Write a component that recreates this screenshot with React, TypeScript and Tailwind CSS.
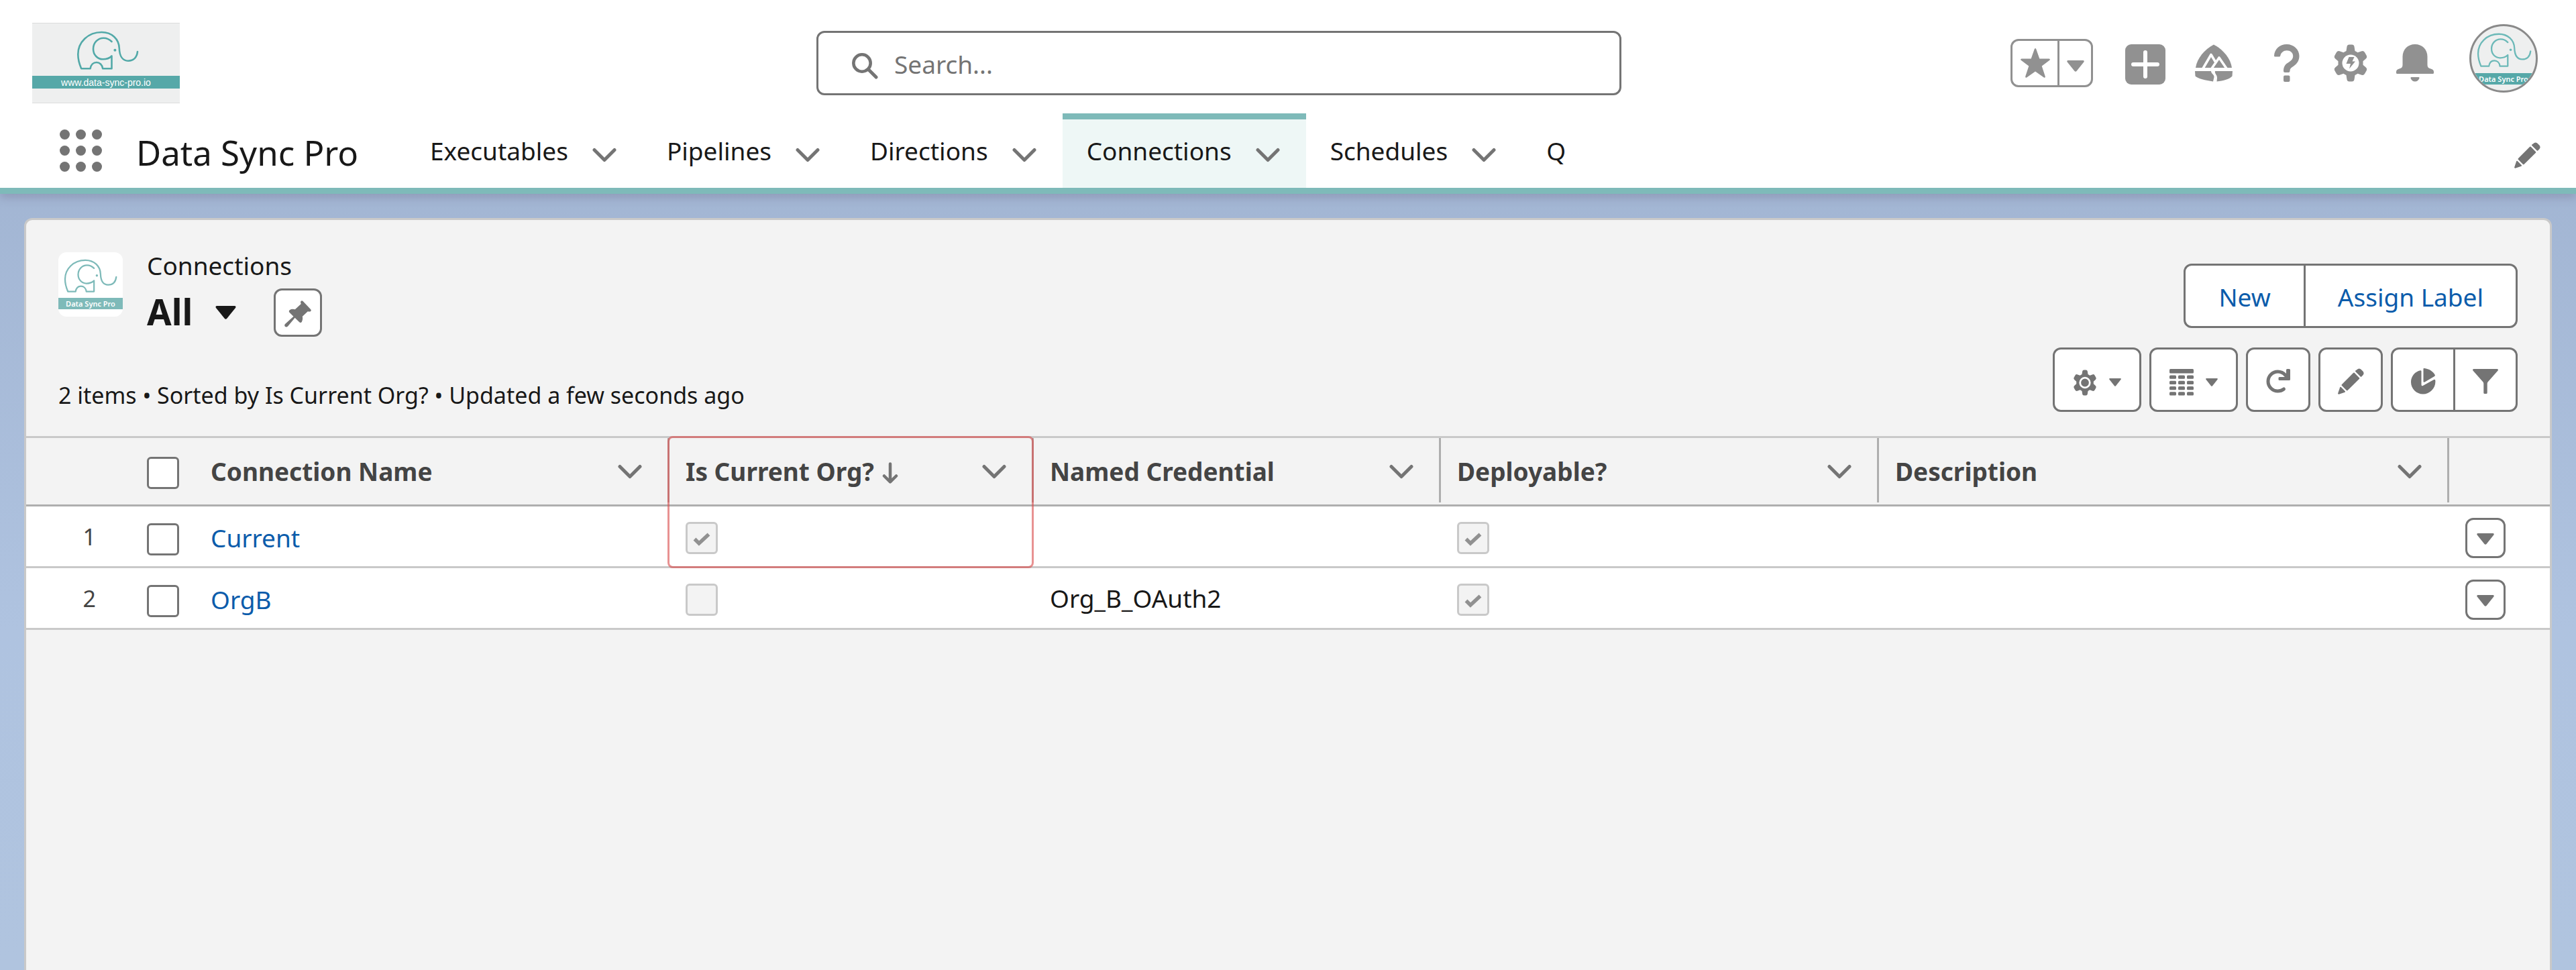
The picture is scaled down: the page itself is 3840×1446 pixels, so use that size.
import React from "react";

type IconProps = { className?: string };

function Elephant({ className }: IconProps) {
  return (
    <svg viewBox="-1 -1 93 59" className={className} fill="none" stroke="currentColor" strokeWidth="2.6" strokeLinecap="round" strokeLinejoin="round" aria-hidden="true">
      <path d="M51.5 15C48 11.500 44 9.700 39.500 9.700C30.500 9.700 24 17 24 26C24 35 30.500 41.300 38.500 41.300C43.500 41.300 48 40 51.500 36.500V55.300H38.200C37.500 49.500 33.500 46 28.900 46C24.200 46 20.500 49.500 19.600 55.300H6.200C3.500 49 1.300 42 1.300 34C1.300 16 16 1 36.500 1C51.500 1 62.300 11 62.800 25C63.200 37 68 43.700 76 43.700C84 43.700 89 38.500 90 30" />
      <circle cx="56.400" cy="27.700" r="2" fill="currentColor" stroke="none" />
    </svg>
  );
}

function Chevron({ className }: IconProps) {
  return (
    <svg viewBox="0 0 36 22" className={className} fill="none" stroke="currentColor" strokeWidth="5" strokeLinecap="round" strokeLinejoin="round" aria-hidden="true">
      <path d="M3 3.500L18 18.500L33 3.500" />
    </svg>
  );
}

function Caret({ className }: IconProps) {
  return (
    <svg viewBox="0 0 26 17" className={className} fill="currentColor" aria-hidden="true">
      <path d="M1.500 0H24.500Q26.500 0.500 25.300 2.500L14.500 16Q13 17.600 11.500 16L0.700 2.500Q-0.500 0.500 1.500 0Z" />
    </svg>
  );
}

function SearchIcon({ className }: IconProps) {
  return (
    <svg viewBox="0 0 39 39" className={className} fill="none" stroke="currentColor" strokeLinecap="round" aria-hidden="true">
      <circle cx="15" cy="15" r="12.700" strokeWidth="4.600" />
      <path d="M25 25L36 36" strokeWidth="5" />
    </svg>
  );
}

function Star({ className }: IconProps) {
  return (
    <svg viewBox="0 0 44 44" className={className} fill="currentColor" aria-hidden="true">
      <path d="M20.800 1Q22 -1 23.200 1L28.300 15.500H42.500Q44.800 16.200 43.300 17.800L31.700 26.500L36.800 42Q37 44.500 34.800 43.600L22 34.500L9.200 43.600Q7 44.500 7.200 42L12.300 26.500L0.700 17.800Q-0.800 16.200 1.500 15.500H15.700Z" />
    </svg>
  );
}

function Plus({ className }: IconProps) {
  return (
    <svg viewBox="0 0 60 60" className={className} aria-hidden="true">
      <rect width="60" height="60" rx="9" fill="currentColor" />
      <path d="M30 12V48M12 30H48" stroke="#fff" strokeWidth="6" strokeLinecap="round" />
    </svg>
  );
}

function Trailhead({ className }: IconProps) {
  return (
    <svg viewBox="0 0 56 56" className={className} aria-hidden="true">
      <path d="M28 0.500C14 8 3 21 1 35H55C53 21 42 8 28 0.500Z" fill="currentColor" />
      <path d="M12 36L24 15.500L31 27M25 36L36 20L47 36" fill="none" stroke="#fff" strokeWidth="3.600" strokeLinejoin="round" />
      <path d="M0 40H24C24 44 29 45 28.500 49L27 55.500C16 54 4 51 0.500 47.500Z" fill="currentColor" />
      <path d="M30 40H56L55.500 47.500C52 52 42 54.500 32.500 55.500L33 50C33 45 29 44 30 40Z" fill="currentColor" />
    </svg>
  );
}

function Question({ className }: IconProps) {
  return (
    <svg viewBox="0 0 38 56" className={className} fill="currentColor" aria-hidden="true">
      <path d="M1.500 18.500Q0 18.500 0 17C0.500 7 8.500 0 18.700 0C29.500 0 37.500 8 37.500 17.500C37.500 26 32 31 27 34C24.500 35.500 23.500 37 23.500 40Q23.300 42 21.500 42H16Q14 42 14 40C14 33 17 29.500 21.500 27C25.500 24.500 28.200 22 28.200 17.500C28.200 12.500 24 9.300 18.900 9.300C14 9.300 10.300 12.500 9.300 17Q9 18.500 7.500 18.500Z" />
      <rect x="14" y="46.500" width="9.500" height="9.500" rx="2" />
    </svg>
  );
}

const gearBody =
  "M20.500 3.500Q21 0.500 24 0.500H28Q31 0.500 31.500 3.500L32.500 10Q34.500 11 36.500 12.300L42.500 10.300Q45.500 9.500 47 12L49.700 16.800Q51 19.500 48.800 21.500L44.500 25.300V30.700L48.800 34.500Q51 36.500 49.700 39.200L47 44Q45.500 46.500 42.500 45.700L36.500 43.700Q34.500 45 32.500 46L31.500 52.500Q31 55.500 28 55.500H24Q21 55.500 20.500 52.500L19.500 46Q17.500 45 15.500 43.700L9.500 45.700Q6.500 46.500 5 44L2.300 39.200Q1 36.500 3.200 34.500L7.500 30.700V25.300L3.200 21.500Q1 19.500 2.300 16.800L5 12Q6.500 9.500 9.500 10.300L15.500 12.300Q17.500 11 19.500 10Z";

function SetupGear({ className }: IconProps) {
  return (
    <svg viewBox="0 0 52 56" className={className} aria-hidden="true">
      <path d={gearBody} fill="currentColor" />
      <circle cx="26" cy="28" r="12.500" fill="#fff" />
      <path d="M23.500 19H31.500L28.500 25.500H33L24 36.500L26 29H19.500Z" fill="currentColor" />
    </svg>
  );
}

function Gear({ className }: IconProps) {
  return (
    <svg viewBox="0 0 52 56" className={className} aria-hidden="true">
      <path d={gearBody} fill="currentColor" />
      <circle cx="26" cy="28" r="10.500" fill="none" stroke="#fff" strokeWidth="4" />
    </svg>
  );
}

function Bell({ className }: IconProps) {
  return (
    <svg viewBox="0 0 56 56" className={className} fill="currentColor" aria-hidden="true">
      <path d="M28 0C17 0 9.500 8 9.500 18.500V31Q9.500 35.500 4.500 36.500Q0 37.500 0 41V42.500Q0 44 1.500 44H54.500Q56 44 56 42.500V41Q56 37.500 51.500 36.500Q46.500 35.500 46.500 31V18.500C46.500 8 39 0 28 0Z" />
      <path d="M22.500 49H33.500Q34.800 49 34.500 50.500C33.500 53.500 31 55.500 28 55.500S22.500 53.500 21.500 50.500Q21.200 49 22.500 49Z" />
    </svg>
  );
}

function Pencil({ className }: IconProps) {
  return (
    <svg viewBox="0 0 39 39" className={className} fill="currentColor" aria-hidden="true">
      <path d="M28.200 2.200Q31 -0.800 34 1.200L37.400 4.600Q39.800 7.600 37.400 10.200L35.200 12.400Q34.500 13 33.800 12.400L26.300 5Q25.700 4.300 26.300 3.600Z" />
      <path d="M23.200 6.800Q24 6.200 24.700 6.800L32 14.200Q32.600 15 32 15.700L14.500 33Q13.700 33.600 13 33L5.800 25.800Q5.200 25 5.800 24.300Z" />
      <path d="M3.300 28Q4 27.400 4.700 28L10.900 34.300Q11.500 35.200 10.500 35.800L1.600 38.700Q0 38.900 0.200 37.300Z" />
    </svg>
  );
}

function Pin({ className }: IconProps) {
  return (
    <svg viewBox="0 0 40 40" className={className} fill="currentColor" aria-hidden="true">
      <path d="M24.500 1Q26 -0.500 27.600 1L39.200 13.200Q40.500 15 38.800 16.200Q37.200 17 34.800 16.200L26.800 23.800Q27.800 28.500 25.800 32Q24 34 22.300 32.300L15.600 25.800L5.200 38.200Q3 40.300 1 38.800Q-0.600 37 1 35L13.500 23.800L7.500 17.800Q6 16 7.700 14.300Q11 12 15.800 13.300L24.800 5Q23.600 2.500 24.500 1Z" />
    </svg>
  );
}

function Columns({ className }: IconProps) {
  return (
    <svg viewBox="0 0 36 40" className={className} fill="currentColor" aria-hidden="true">
      <rect width="36" height="6.500" rx="1.500" />
      {[9.5, 17.7, 26, 34.3].map((y) =>
        [0, 13, 26].map((x) => <rect key={x + "-" + y} x={x} y={y} width="10" height="5.200" rx="1.500" />)
      )}
    </svg>
  );
}

function Refresh({ className }: IconProps) {
  return (
    <svg viewBox="0 0 36 37" className={className} aria-hidden="true">
      <path d="M29 9.500C26 6 22 4 17.500 4C9.500 4 3 10.500 3 18.500S9.500 33 17.500 33C21 33 24 32 26.500 30" fill="none" stroke="currentColor" strokeWidth="5" strokeLinecap="round" />
      <path d="M31.500 0H34.500Q36 0 36 1.500V15.500Q36 17 34.500 17H20Q18.500 17 18.500 15.500V13.500Q18.500 12 20 12H30V1.500Q30 0 31.500 0Z" fill="currentColor" />
    </svg>
  );
}

function Pie({ className }: IconProps) {
  return (
    <svg viewBox="0 0 37 39" className={className} fill="currentColor" aria-hidden="true">
      <path d="M14 3.300Q15.500 3.100 15.500 4.600V24.500Q15.500 27 17.700 26L34 17Q36 16.200 36.300 18C37.500 29 28.500 38.500 18 38.500C8 38.500 0 30.500 0 20.500C0 12 6 4.800 14 3.300Z" />
      <path d="M18.500 1Q18.500 -0.300 20 0C27 0.800 33 4.500 35.800 10Q36.200 11.300 35 12L20.500 20.500Q18.500 21.500 18.500 19.500Z" />
    </svg>
  );
}

function Funnel({ className }: IconProps) {
  return (
    <svg viewBox="0 0 38 37" className={className} fill="currentColor" aria-hidden="true">
      <path d="M1.500 0H36.500Q39 0.500 37.300 2.700L22.500 19.500Q21.700 20.500 21.700 22V35.500Q21.700 37 20.200 37H17.800Q16.300 37 16.300 35.500V22Q16.300 20.500 15.500 19.500L0.700 2.700Q-1 0.500 1.500 0Z" />
    </svg>
  );
}

function SortArrow({ className }: IconProps) {
  return (
    <svg viewBox="0 0 24 32" className={className} fill="none" stroke="currentColor" strokeWidth="4.500" strokeLinecap="round" strokeLinejoin="round" aria-hidden="true">
      <path d="M12 2.500V28M3 20.500L12 29.300L21 20.500" />
    </svg>
  );
}

const tabs = ["Executables", "Pipelines", "Directions", "Connections", "Schedules"];

function Tab({ label, active }: { label: string; active: boolean }) {
  return (
    <li className={active ? "flex border-t-[9px] border-[#7ebab9] bg-[#eef7f6]" : "flex border-t-[9px] border-transparent"}>
      <a href="#" aria-current={active ? "page" : undefined} className="flex items-center pb-2 pl-9">
        {label}
      </a>
      <button type="button" aria-label={label + " menu"} className="flex items-center pt-1 pr-[39px] pl-9 text-[#747474]">
        <Chevron className="h-[22px] w-9" />
      </button>
    </li>
  );
}

function Header() {
  return (
    <header className="relative border-b-[9px] border-[#7ebab9] bg-white shadow-[0_6px_12px_rgba(90,80,110,0.25)]">
      <div className="grid h-[169px] grid-cols-[1169fr_1200fr_1370fr] pr-[53px] pl-12">
        <a href="#" aria-label="www.data-sync-pro.io" className="mt-[34px] flex h-[120px] w-[220px] flex-col border-y border-[#dcdcdc] bg-[#eeefef] pt-[11px] text-[#52a9a8]">
          <Elephant className="ml-[66px] h-[59px] w-[93px]" />
          <span className="mt-2 flex h-[19px] items-center justify-center bg-[#56a8a8] font-['Liberation_Sans'] text-[14px] leading-none text-white">
            www.data-sync-pro.io
          </span>
        </a>
        <label className="mt-[46px] flex h-24 items-center rounded-xl border-[3px] border-[#747474] pt-1 pl-[50px] text-[#747474]">
          <SearchIcon className="mt-1 size-[39px]" />
          <input type="search" aria-label="Search" placeholder="Search..." className="ml-6 min-w-0 flex-1 bg-transparent text-[37px] outline-none placeholder:text-[#747474]" />
        </label>
        <div className="mt-9 flex h-[102px] items-center justify-end self-start pr-1 text-[#919191]">
          <div className="mt-[14px] mr-12 flex h-[72px] w-[123px] rounded-xl border-[3px] border-[#919191]">
            <button type="button" aria-label="Favorite" className="flex w-[70px] items-center justify-center border-r-[3px] border-[#919191]">
              <Star className="size-11" />
            </button>
            <button type="button" aria-label="Favorites list" className="flex flex-1 items-center justify-center">
              <Caret className="mt-2 h-[17px] w-[26px]" />
            </button>
          </div>
          <div className="mr-[53px] flex h-full items-center pt-[14px]">
            <button type="button" aria-label="Global actions"><Plus className="mt-1 size-[60px]" /></button>
            <button type="button" aria-label="Guidance center" className="ml-11"><Trailhead className="size-14" /></button>
            <button type="button" aria-label="Help" className="ml-[62px]"><Question className="h-14 w-[38px]" /></button>
            <button type="button" aria-label="Setup" className="ml-[50px]"><SetupGear className="h-14 w-[52px]" /></button>
            <button type="button" aria-label="Notifications" className="ml-[42px]"><Bell className="size-14" /></button>
          </div>
          <button type="button" aria-label="View profile" className="flex size-[102px] flex-col overflow-hidden rounded-full border-[3px] border-[#8a8a8a] bg-[#eeefef] pt-[10px] text-[#6cb9b8]">
            <Elephant className="ml-2 h-[52px] w-[82px]" />
            <span className="mt-2 flex h-[17px] w-full items-center justify-center bg-[#56a8a8] text-[11px] leading-none font-semibold whitespace-nowrap text-white">
              Data Sync Pro
            </span>
          </button>
        </div>
      </div>
      <div className="flex h-[111px] items-stretch pr-[53px] pl-[89px]">
        <button type="button" aria-label="App launcher" className="mt-6 grid size-[63px] grid-cols-3 gap-[9px] text-[#747474]">
          {Array.from({ length: 9 }, (_, i) => (
            <span key={i} className="size-[15px] rounded-full bg-[#747474]" />
          ))}
        </button>
        <p className="mt-5 ml-[51px] w-[400px] text-[51px] leading-[76px] whitespace-nowrap">Data Sync Pro</p>
        <nav aria-label="Main" className="flex flex-1">
          <ul className="ml-[2px] flex text-[37px]">
            {tabs.map((t) => (
              <Tab key={t} label={t} active={t === "Connections"} />
            ))}
            <li className="flex border-t-[9px] border-transparent">
              <a href="#" className="flex items-center pb-2 pl-9">Q</a>
            </li>
          </ul>
        </nav>
        <button type="button" aria-label="Edit navigation" className="mt-[43px] self-start text-[#747474]">
          <Pencil className="size-[39px]" />
        </button>
      </div>
    </header>
  );
}

function ToolButton({ label, wide, children }: { label: string; wide?: boolean; children: React.ReactNode }) {
  return (
    <button type="button" aria-label={label} className={(wide ? "w-[132px] gap-[18px]" : "w-24") + " flex h-24 items-center justify-center rounded-xl border-[3px] border-[#747474] bg-white pt-1"}>
      {children}
    </button>
  );
}

function Tick() {
  return (
    <svg viewBox="0 0 26 20" className="pointer-events-none absolute mt-1 h-5 w-[26px] text-[#919191]" fill="none" stroke="currentColor" strokeWidth="5.500" aria-hidden="true">
      <path d="M2.500 9.500L9 16L23.500 2.500" />
    </svg>
  );
}

function Flag({ label, checked }: { label: string; checked: boolean }) {
  return (
    <span className="relative flex size-12 items-center justify-center">
      <input type="checkbox" aria-label={label} checked={checked} disabled readOnly className="size-12 appearance-none rounded-md border-[3px] border-[#c9c9c9] bg-[#f3f3f3]" />
      {checked && <Tick />}
    </span>
  );
}

const boxClass = "block size-12 appearance-none rounded-md border-[3px] border-[#747474] bg-white";

const columns = [
  { label: "Connection Name", sorted: false },
  { label: "Is Current Org?", sorted: true },
  { label: "Named Credential", sorted: false },
  { label: "Deployable?", sorted: false },
  { label: "Description", sorted: false },
];

const rows = [
  { name: "Current", current: true, credential: "", deployable: true, description: "" },
  { name: "OrgB", current: false, credential: "Org_B_OAuth2", deployable: true, description: "" },
];

function ConnectionsTable() {
  return (
    <table className="w-full table-fixed border-collapse text-[37px]">
      <colgroup>
        <col className="w-[251px]" />
        <col className="w-[708px]" />
        <col className="w-[543px]" />
        <col className="w-[607px]" />
        <col className="w-[653px]" />
        <col />
        <col className="w-[150px]" />
      </colgroup>
      <thead>
        <tr className="h-[102px] border-t-[3px] border-b-[3px] border-t-[#c9c9c9] border-b-[#aeaeae] text-left text-[#444444]">
          <th className="p-0 pt-1">
            <input type="checkbox" aria-label="Select all" className={boxClass + " ml-[180px]"} />
          </th>
          {columns.map((c) => (
            <th key={c.label} aria-sort={c.sorted ? "descending" : undefined} className="relative p-0 align-top font-bold">
              <div className="flex h-24 items-center border-r-[3px] border-[#aeaeae] pt-1 pr-[38px] pl-6">
                <span className="flex-1 whitespace-nowrap">
                  {c.label}
                  {c.sorted && <SortArrow className="ml-3 inline h-8 w-6 align-[-4px] text-[#747474]" />}
                </span>
                <button type="button" aria-label={c.label + " column actions"} className="text-[#747474]">
                  <Chevron className="h-[22px] w-9" />
                </button>
              </div>
              {c.sorted && (
                <span className="pointer-events-none absolute -top-[3px] -left-[3px] h-[197px] w-[546px] rounded-lg border-[3px] border-[#d94a4a]/60" />
              )}
            </th>
          ))}
          <th className="p-0" aria-label="Row actions" />
        </tr>
      </thead>
      <tbody>
        {rows.map((r, i) => (
          <tr key={r.name} className="h-[92px] border-b-[3px] border-[#c9c9c9] bg-white">
            <td className="p-0 pt-2">
              <div className="flex items-center">
                <span className="w-[104px] pb-2 text-right text-[34px] leading-10 text-[#444444]">{i + 1}</span>
                <input type="checkbox" aria-label={"Select " + r.name} className={boxClass + " ml-[76px]"} />
              </div>
            </td>
            <td className="p-0 pt-1 pl-6">
              <a href="#" className="text-[#0b5cab]">{r.name}</a>
            </td>
            <td className="p-0 pt-1 pl-6"><Flag label={r.name + " is current org"} checked={r.current} /></td>
            <td className="p-0 pl-6">{r.credential}</td>
            <td className="p-0 pt-1 pl-6"><Flag label={r.name + " is deployable"} checked={r.deployable} /></td>
            <td className="p-0 pl-6">{r.description}</td>
            <td className="p-0 pt-1">
              <button type="button" aria-label={"Show actions for " + r.name} className="ml-6 flex size-[60px] items-center justify-center rounded-xl border-[3px] border-[#747474] bg-white pt-1 text-[#747474]">
                <Caret className="h-[17px] w-[26px]" />
              </button>
            </td>
          </tr>
        ))}
      </tbody>
    </table>
  );
}

export default function App() {
  return (
    <div className="flex min-h-screen flex-col bg-linear-to-b from-[#9db0ce] via-[#afc3e0] via-65% to-[#b0c4df] font-['Noto_Sans','Open_Sans',sans-serif] text-[#181818]">
      <Header />
      <main className="mx-9 mt-9 flex flex-1 flex-col rounded-t-xl border-[3px] border-b-0 border-[#c9c9c9] bg-[#f3f3f3]">
        <div className="flex h-[322px] justify-between pr-12 pl-12">
          <div>
            <div className="flex pt-12">
              <div className="flex size-24 flex-col overflow-hidden rounded-xl bg-white pt-[10px] text-[#7ebab9]">
                <Elephant className="ml-2 h-[51px] w-20" />
                <span className="mt-[7px] flex h-[17px] items-center justify-center bg-[#7ebab9] text-[11px] leading-none font-semibold text-white">Data Sync Pro</span>
              </div>
              <div className="ml-9">
                <p className="text-[37px] leading-10">Connections</p>
                <div className="mt-[14px] flex h-[72px] items-center">
                  <h1 className="pb-1 text-[53px] leading-none font-bold">All</h1>
                  <button type="button" aria-label="Select a list view" className="ml-[34px]">
                    <Caret className="h-5 w-[31px]" />
                  </button>
                  <button type="button" aria-label="Pin this list view" className="ml-14 flex size-[72px] items-center justify-center rounded-xl border-[3px] border-[#747474] bg-white pt-1 text-[#747474]">
                    <Pin className="size-10" />
                  </button>
                </div>
              </div>
            </div>
            <p className="mt-[60px] text-[34px] leading-[54px]">2 items • Sorted by Is Current Org? • Updated a few seconds ago</p>
          </div>
          <div className="flex flex-col items-end pt-[65px] text-[#747474]">
            <div className="flex h-24 divide-x-[3px] divide-[#747474] overflow-hidden rounded-xl border-[3px] border-[#747474] bg-white text-[37px] text-[#0b5cab]">
              <button type="button" className="px-[49px] pt-1">New</button>
              <button type="button" className="px-12 pt-1">Assign Label</button>
            </div>
            <div className="mt-[29px] flex gap-3">
              <ToolButton label="List view controls" wide>
                <Gear className="mt-1 h-[39px] w-9" />
                <Caret className="mt-1 h-3 w-[18px]" />
              </ToolButton>
              <ToolButton label="Select list display" wide>
                <Columns className="mt-1 h-10 w-9" />
                <Caret className="mt-1 h-3 w-[18px]" />
              </ToolButton>
              <ToolButton label="Refresh"><Refresh className="h-[37px] w-9" /></ToolButton>
              <ToolButton label="Inline edit"><Pencil className="size-[39px]" /></ToolButton>
              <div className="flex h-24 w-[189px] divide-x-[3px] divide-[#747474] rounded-xl border-[3px] border-[#747474] bg-white">
                <button type="button" aria-label="Show charts" className="flex flex-1 items-center justify-center pt-1"><Pie className="h-[39px] w-[37px]" /></button>
                <button type="button" aria-label="Show filters" className="flex flex-1 items-center justify-center pt-1"><Funnel className="h-[37px] w-[38px]" /></button>
              </div>
            </div>
          </div>
        </div>
        <ConnectionsTable />
      </main>
    </div>
  );
}
